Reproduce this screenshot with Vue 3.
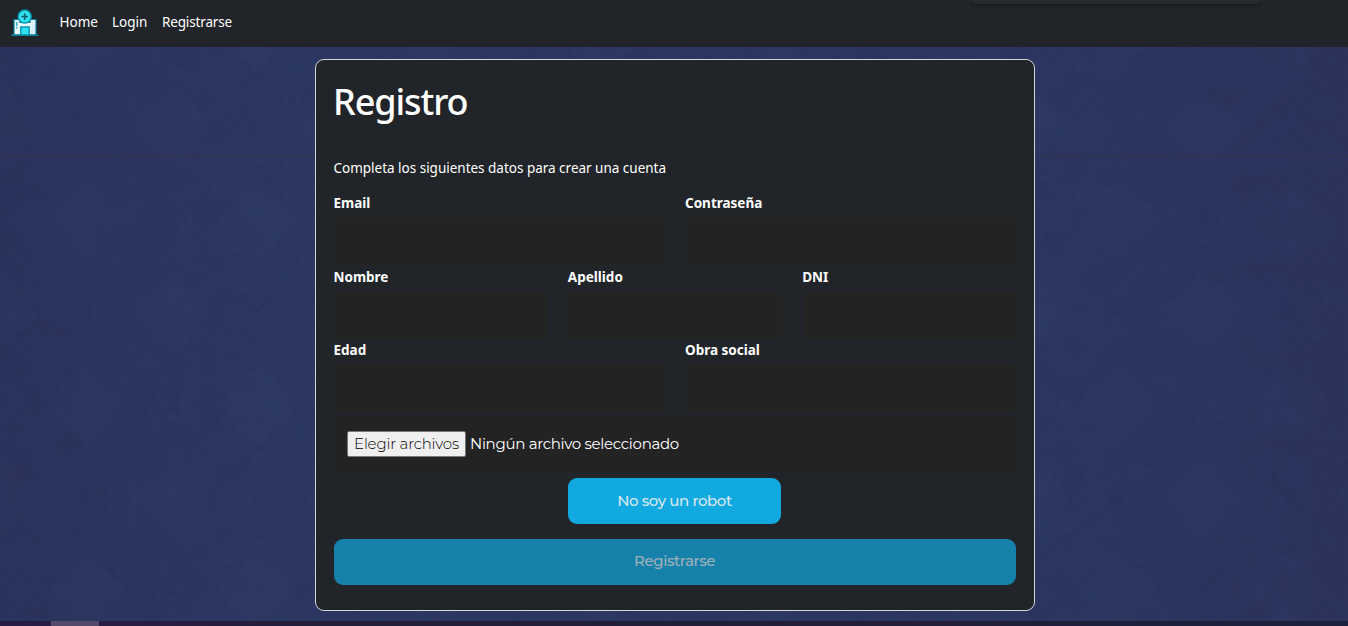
<script setup>
import { ref } from 'vue'

const links = [
  { text: 'Home', cls: 'home' },
  { text: 'Login', cls: 'login' },
  { text: 'Registrarse', cls: 'signup' },
]
const rows = [
  [{ label: 'Email', type: 'email' }, { label: 'Contraseña', type: 'password' }],
  [{ label: 'Nombre', type: 'text' }, { label: 'Apellido', type: 'text' }, { label: 'DNI', type: 'text' }],
  [{ label: 'Edad', type: 'text' }, { label: 'Obra social', type: 'text' }],
]
const rings = [0.5, 0.62, 0.74, 0.86, 0.98]
const centers = [[86, 0], [86, 186], [0, 93], [172, 93]]
const verified = ref(false)
</script>

<template>
  <div class="page">
    <svg class="backdrop" width="1348" height="626" aria-hidden="true">
      <defs>
        <linearGradient id="base" x1="0" x2="1" y1="0" y2="0">
          <stop offset="0" stop-color="#2b355f" />
          <stop offset=".2" stop-color="#2d3965" />
          <stop offset=".8" stop-color="#2c3864" />
          <stop offset="1" stop-color="#2c355e" />
        </linearGradient>
        <filter id="soften" x="0" y="0" width="1" height="1" color-interpolation-filters="sRGB">
          <feTurbulence type="fractalNoise" baseFrequency=".05" numOctaves="2" seed="4" result="noise" />
          <feDisplacementMap in="SourceGraphic" in2="noise" scale="12" xChannelSelector="R" yChannelSelector="G" />
          <feGaussianBlur stdDeviation="1.5" />
        </filter>
        <filter id="mottle" x="0" y="0" width="1" height="1" color-interpolation-filters="sRGB">
          <feTurbulence type="fractalNoise" baseFrequency=".035" numOctaves="2" seed="8" />
          <feColorMatrix values="0 0 0 0 .18  0 0 0 0 .19  0 0 0 0 .34  1.6 0 0 0 -.5" />
        </filter>
        <pattern id="weave" width="172" height="186" patternUnits="userSpaceOnUse" y="33">
          <g fill="none" stroke="#1f2850" stroke-width="3">
            <g v-for="(c, i) in centers" :key="i" :transform="`translate(${c[0]} ${c[1]})`">
              <path
                v-for="s in rings"
                :key="s"
                :d="`M0 ${-93 * s}C${20 * s} ${-66 * s} ${62 * s} ${-36 * s} ${86 * s} 0C${62 * s} ${36 * s} ${20 * s} ${66 * s} 0 ${93 * s}C${-20 * s} ${66 * s} ${-62 * s} ${36 * s} ${-86 * s} 0C${-62 * s} ${-36 * s} ${-20 * s} ${-66 * s} 0 ${-93 * s}`"
              />
            </g>
          </g>
        </pattern>
      </defs>
      <rect width="1348" height="626" fill="url(#base)" />
      <rect width="1348" height="626" filter="url(#mottle)" opacity=".35" />
      <rect width="1348" height="626" fill="url(#weave)" filter="url(#soften)" opacity=".2" />
      <rect y="154" width="1348" height="4" fill="#34344f" opacity=".4" />
    </svg>

    <nav class="navbar">
      <svg class="logo" width="28" height="28" viewBox="0 0 28 28">
        <path d="M3 10.5h6v3h10v-3h6V26H3z" fill="#e6f8fc" stroke="#087e9d" stroke-width="1.2" />
        <path d="M20 15h4v10h-4z" fill="#d4eff5" />
        <path d="M5.8 13v4M5.8 18v1.5" stroke="#0a9abb" stroke-width="1.2" />
        <path d="M9.8 26v-8h8.4v8" fill="#2be0f0" stroke="#0795b4" stroke-width="1.4" />
        <circle cx="13.7" cy="7.6" r="6.5" fill="#35e4ef" stroke="#0795b4" stroke-width="1.5" />
        <path d="M13.7 4.3v6.6M10.4 7.6H17" stroke="#0b6078" stroke-width="1.6" />
        <path d="M.2 26.2h27" stroke="#087e9d" stroke-width="1.6" />
      </svg>
      <a v-for="link in links" :key="link.text" :class="['link', link.cls]">{{ link.text }}</a>
      <div class="drop-edge"></div>
    </nav>

    <main>
      <form class="card" @submit.prevent>
        <h1><span>Registro</span></h1>
        <p><span>Completa los siguientes datos para crear una cuenta</span></p>
        <div v-for="(row, i) in rows" :key="i" class="row">
          <label v-for="field in row" :key="field.label" class="field">
            <span>{{ field.label }}</span>
            <input :type="field.type">
          </label>
        </div>
        <div class="file">
          <button type="button" class="choose">Elegir archivos</button>
          <span class="filename">Ningún archivo seleccionado</span>
        </div>
        <button type="button" class="action robot" @click="verified = true"><span>No soy un robot</span></button>
        <button type="submit" class="action submit" :disabled="!verified"><span>Registrarse</span></button>
      </form>
    </main>

    <footer><div class="thumb"></div></footer>
  </div>
</template>

<style>
body { margin: 0; overflow: hidden; background: #2c3662; }
</style>

<style scoped>
* { box-sizing: border-box; }
.page { position: relative; width: 1348px; height: 626px; overflow: hidden; display: flex; flex-direction: column; color: #fff; font-family: "Noto Sans", "Open Sans", sans-serif; font-size: 14px; }
.backdrop { position: absolute; inset: 0; }
.navbar { position: relative; height: 47px; flex: none; background: #212529; display: flex; align-items: flex-start; padding-left: 11px; }
.logo { margin-top: 9px; flex: none; }
.link { margin-top: 12px; line-height: 20px; font-size: 13.5px; white-space: nowrap; }
.home { margin-left: 20.5px; width: 52.5px; }
.login { width: 50px; }
.signup { letter-spacing: -.15px; }
.drop-edge { position: absolute; left: 972px; top: 0; width: 288px; height: 4px; background: #292a2d; border-radius: 0 0 4px 4px; box-shadow: 0 1px 3px #15181b; }
main { position: relative; flex: 1; padding-top: 12px; display: flex; justify-content: center; align-items: flex-start; }
.card { width: 720px; height: 552px; margin-left: 2px; border: 1px solid #d3d4d5; border-radius: 9px; background: #212529; padding: 0 18px; display: flex; flex-direction: column; }
h1 { margin: 17px 0 0; height: 50px; line-height: 50px; font-size: 36px; font-weight: 500; letter-spacing: -1.1px; text-indent: -1px; white-space: nowrap; }
p { margin: 31px 0 0; height: 20px; line-height: 20px; font-size: 13.5px; letter-spacing: -.01px; white-space: nowrap; text-indent: -.5px; }
.row { display: flex; gap: 21px; height: 73.5px; flex: none; }
.row:first-of-type { margin-top: 15px; }
.field { flex: 1; display: flex; flex-direction: column; font-weight: 700; font-size: 13.5px; line-height: 20px; text-indent: -.5px; }
.field input { margin-top: 4px; width: 100%; min-width: 0; height: 48px; border: 0; border-radius: 3px; background: #232323; padding: 0 13px; color: #fff; font: inherit; outline: 0; }
.file { height: 56px; flex: none; margin-top: 2px; background: #232323; border-radius: 3px; display: flex; align-items: center; padding-left: 13px; gap: 4px; font-family: Montserrat, "Open Sans", sans-serif; font-size: 15px; letter-spacing: -.31px; white-space: nowrap; }
.choose { width: 119px; height: 26px; padding: 0; border: 1px solid #767676; border-radius: 2px; background: #efefef; color: #000; font: 300 15px/22px Montserrat, "Open Sans", sans-serif; letter-spacing: -.18px; white-space: nowrap; }
.action { border: 0; border-radius: 9px; height: 46px; padding: 0; flex: none; font: 500 15px/44px Montserrat, "Open Sans", sans-serif; letter-spacing: -.42px; color: #d8e8ee; background: #12a8e0; }
.robot { width: 213px; align-self: center; margin: 6px 1px 0 0; }
.submit { margin-top: 15px; padding: 0 1px 2px 0; color: #9eb0b8; background: #1682ac; }
footer { position: relative; height: 5px; flex: none; background: linear-gradient(90deg, #291b48, #241d3b 20%, #201e37 50%, #241e38 68%, #1d203c 82%, #1b213c); padding-left: 51px; }
.thumb { width: 48px; height: 5px; background: #53496b; }
</style>
